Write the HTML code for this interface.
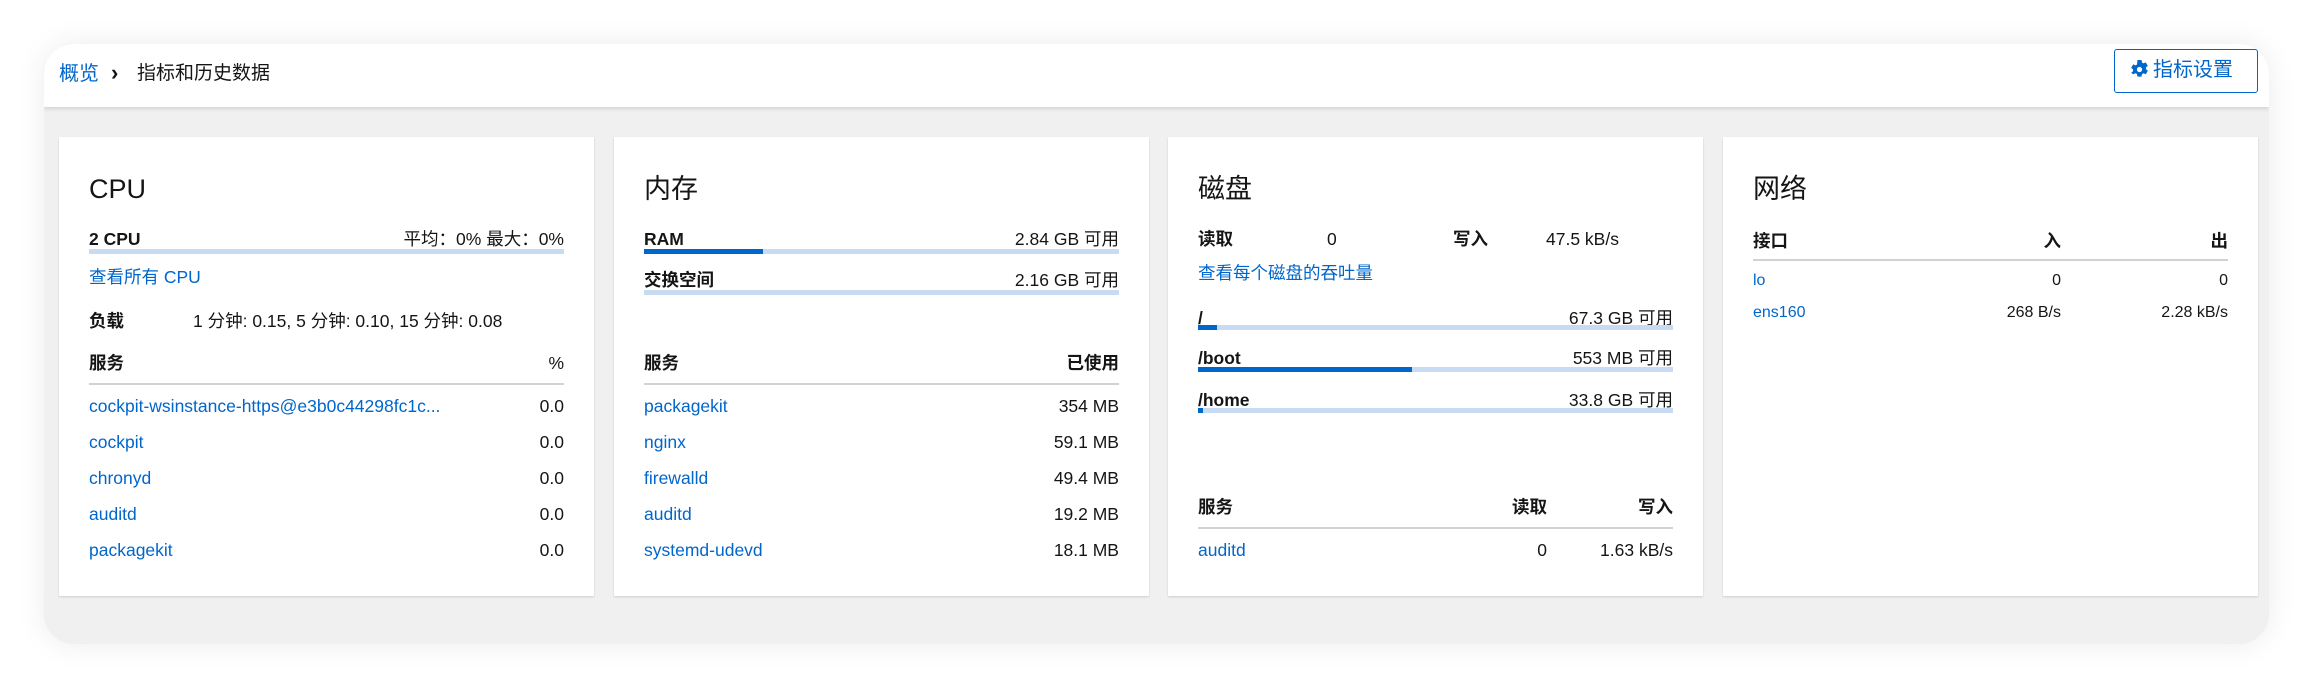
<!DOCTYPE html>
<html><head><meta charset="utf-8"><style>
*{margin:0;padding:0;box-sizing:border-box}
body{width:2313px;height:688px;background:#fff;font-family:"Liberation Sans","Noto Sans CJK SC",sans-serif;color:#151515;font-size:17.5px;position:relative;overflow:hidden}
.frame{position:absolute;left:44px;top:44px;width:2225px;height:600px;background:#f0f0f0;border-radius:30px;box-shadow:0 0 30px rgba(0,0,0,.08);overflow:hidden}
.hdr{position:absolute;left:0;top:0;width:100%;height:63px;background:#fff;box-shadow:0 2px 4px rgba(0,0,0,.12)}
.t{position:absolute;height:28px;line-height:28px;white-space:nowrap;margin-top:3px}
.r{text-align:right}
.a{color:#0066cc}
.b{font-weight:bold}
.card{position:absolute;top:137px;width:535px;height:459px;background:#fff;box-shadow:0 1px 2px rgba(0,0,0,.15)}
.card .t{left:30px}
.card .t.r{left:auto;right:30px}
.h{font-size:27px;height:40px;line-height:40px}
.bar{position:absolute;left:30px;right:30px;height:5px;background:#c7dbf2}
.bar i{display:block;height:5px;background:#0066cc}
.ln{position:absolute;left:30px;right:30px;height:2px;background:#d2d2d2}
.btn{position:absolute;left:2114px;top:49px;width:144px;height:44px;border:1.5px solid #0066cc;border-radius:3px;color:#0066cc;font-size:20px;line-height:41px;padding-left:15px}
.sm{font-size:16px}
</style></head><body>
<div class="frame"><div class="hdr"></div></div>
<div class="t a" style="left:59px;top:57px;font-size:20px">概览</div>
<div class="t b" style="left:111px;top:56px;font-size:22px">›</div>
<div class="t" style="left:137px;top:57px;font-size:19px">指标和历史数据</div>
<div class="btn"><svg width="19" height="19" viewBox="0 0 16 16" style="vertical-align:-3px;margin-right:4px"><path fill="#0066cc" fill-rule="evenodd" d="M6.3 0h3.4l.4 2.1 1.2.7 2-.8 1.7 2.9-1.6 1.4v1.4l1.6 1.4-1.7 2.9-2-.8-1.2.7-.4 2.1H6.3l-.4-2.1-1.2-.7-2 .8L1 10.8l1.6-1.4V8L1 6.6l1.7-2.9 2 .8 1.2-.7zM8 5.8a2.2 2.2 0 1 0 0 4.4 2.2 2.2 0 1 0 0-4.4z"/></svg>指标设置</div>

<!-- CPU -->
<div class="card" style="left:59px">
<div class="t h" style="top:29px">CPU</div>
<div class="t b" style="top:85px">2 CPU</div>
<div class="t r" style="top:85px">平均：0% 最大：0%</div>
<div class="bar" style="top:112px"></div>
<div class="t a" style="top:123px">查看所有 CPU</div>
<div class="t b" style="top:167px">负载</div>
<div class="t" style="top:167px;left:134px">1 分钟: 0.15, 5 分钟: 0.10, 15 分钟: 0.08</div>
<div class="t b" style="top:209px">服务</div>
<div class="t r" style="top:209px">%</div>
<div class="ln" style="top:246px"></div>
<div class="t a" style="top:252px">cockpit-wsinstance-https@e3b0c44298fc1c...</div><div class="t r" style="top:252px">0.0</div>
<div class="t a" style="top:288px">cockpit</div><div class="t r" style="top:288px">0.0</div>
<div class="t a" style="top:324px">chronyd</div><div class="t r" style="top:324px">0.0</div>
<div class="t a" style="top:360px">auditd</div><div class="t r" style="top:360px">0.0</div>
<div class="t a" style="top:396px">packagekit</div><div class="t r" style="top:396px">0.0</div>
</div>

<!-- Memory -->
<div class="card" style="left:614px">
<div class="t h" style="top:29px">内存</div>
<div class="t b" style="top:85px">RAM</div>
<div class="t r" style="top:85px">2.84 GB 可用</div>
<div class="bar" style="top:112px"><i style="width:25%"></i></div>
<div class="t b" style="top:126px">交换空间</div>
<div class="t r" style="top:126px">2.16 GB 可用</div>
<div class="bar" style="top:153px"></div>
<div class="t b" style="top:209px">服务</div>
<div class="t r b" style="top:209px">已使用</div>
<div class="ln" style="top:246px"></div>
<div class="t a" style="top:252px">packagekit</div><div class="t r" style="top:252px">354 MB</div>
<div class="t a" style="top:288px">nginx</div><div class="t r" style="top:288px">59.1 MB</div>
<div class="t a" style="top:324px">firewalld</div><div class="t r" style="top:324px">49.4 MB</div>
<div class="t a" style="top:360px">auditd</div><div class="t r" style="top:360px">19.2 MB</div>
<div class="t a" style="top:396px">systemd-udevd</div><div class="t r" style="top:396px">18.1 MB</div>
</div>

<!-- Disk -->
<div class="card" style="left:1168px">
<div class="t h" style="top:29px">磁盘</div>
<div class="t b" style="top:85px">读取</div>
<div class="t" style="top:85px;left:159px">0</div>
<div class="t b" style="top:85px;left:285px">写入</div>
<div class="t" style="top:85px;left:378px">47.5 kB/s</div>
<div class="t a" style="top:119px">查看每个磁盘的吞吐量</div>
<div class="t b" style="top:164px">/</div><div class="t r" style="top:164px">67.3 GB 可用</div>
<div class="bar" style="top:188px"><i style="width:4%"></i></div>
<div class="t b" style="top:204px">/boot</div><div class="t r" style="top:204px">553 MB 可用</div>
<div class="bar" style="top:230px"><i style="width:45%"></i></div>
<div class="t b" style="top:246px">/home</div><div class="t r" style="top:246px">33.8 GB 可用</div>
<div class="bar" style="top:271px"><i style="width:1%"></i></div>
<div class="t b" style="top:353px">服务</div>
<div class="t r b" style="top:353px;right:156px">读取</div>
<div class="t r b" style="top:353px">写入</div>
<div class="ln" style="top:390px"></div>
<div class="t a" style="top:396px">auditd</div>
<div class="t r" style="top:396px;right:156px">0</div>
<div class="t r" style="top:396px">1.63 kB/s</div>
</div>

<!-- Network -->
<div class="card" style="left:1723px">
<div class="t h" style="top:29px">网络</div>
<div class="t b" style="top:87px">接口</div>
<div class="t r b" style="top:87px;right:197px">入</div>
<div class="t r b" style="top:87px">出</div>
<div class="ln" style="top:122px"></div>
<div class="t a sm" style="top:127px">lo</div>
<div class="t r sm" style="top:127px;right:197px">0</div>
<div class="t r sm" style="top:127px">0</div>
<div class="t a sm" style="top:159px">ens160</div>
<div class="t r sm" style="top:159px;right:197px">268 B/s</div>
<div class="t r sm" style="top:159px">2.28 kB/s</div>
</div>
</body></html>
